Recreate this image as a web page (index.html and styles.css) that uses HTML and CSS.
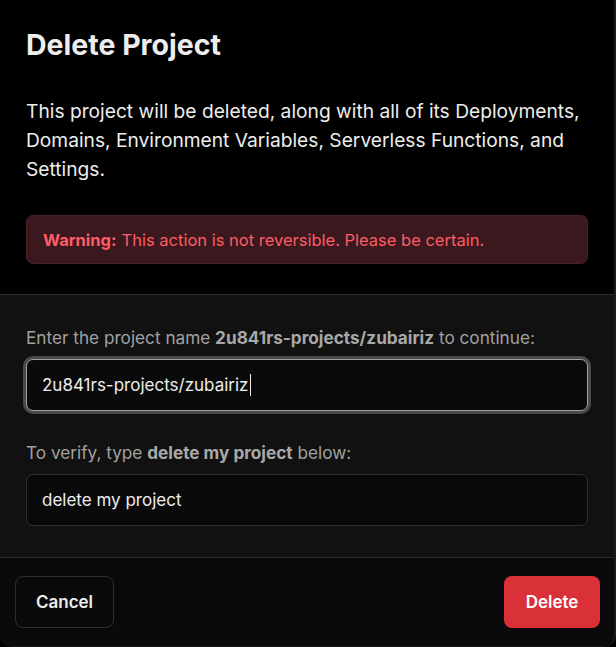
FILE: index.html
```html
<!DOCTYPE html>
<html>
<head>
<meta charset="utf-8">
<link rel="stylesheet" href="styles.css">
</head>
<body>
<div class="modal">
  <div class="head">
    <h1 class="title">Delete Project</h1>
    <p class="desc">This project will be deleted, along with all of its Deployments, Domains, Environment Variables, Serverless Functions, and Settings.</p>
    <div class="warning"><strong>Warning:</strong> This action is not reversible. Please be certain.</div>
  </div>
  <div class="body">
    <label class="label">Enter the project name <b>2u841rs-projects/zubairiz</b> to continue:</label>
    <div class="input focused">2u841rs-projects/zubairiz<span class="caret"></span></div>
    <label class="label second">To verify, type <b>delete my project</b> below:</label>
    <div class="input">delete my project</div>
  </div>
  <div class="foot">
    <button class="btn cancel">Cancel</button>
    <button class="btn delete">Delete</button>
  </div>
</div>
</body>
</html>
```
FILE: styles.css
```css
* { box-sizing: border-box; }
html, body { margin: 0; padding: 0; background: #000; }
body { font-family: Inter, "Noto Sans", sans-serif; color: #ededed; }
.modal {
  width: 616px;
  height: 647px;
  display: flex;
  flex-direction: column;
  border-radius: 0 0 12px 12px;
  overflow: hidden;
  border-right: 2px solid #1a1a1a;
  border-bottom: 1px solid #1a1a1a;
}
.head {
  background: #000;
  padding: 29px 26px 30px;
  border-bottom: 1px solid #2e2e2e;
}
.title {
  margin: 0;
  font-size: 28.5px;
  line-height: 32px;
  font-weight: 700;
  color: #ededed;
}
.desc {
  margin: 36px -12px 0 0;
  font-size: 19.2px;
  line-height: 29px;
  color: #ededed;
}
.warning {
  margin-top: 31px;
  height: 49px;
  display: flex;
  align-items: center;
  padding: 0 16px;
  background: #3a181d;
  border: 1px solid #4a2026;
  border-radius: 7px;
  color: #ff5c66;
  font-size: 16.5px;
}
.warning strong { font-weight: 700; margin-right: 5px; }
.body {
  background: #111;
  padding: 33px 26px 31px;
  border-bottom: 1px solid #2e2e2e;
  display: flex;
  flex-direction: column;
}
.label {
  font-size: 17.2px;
  line-height: 20px;
  color: #a1a1a1;
  margin-bottom: 11px;
}
.label b { font-weight: 700; color: #a8a8a8; }
.label.second { margin-top: 32px; }
.input {
  height: 52px;
  background: #0a0a0a;
  border: 1px solid #2e2e2e;
  border-radius: 7px;
  padding: 0 15px;
  display: flex;
  align-items: center;
  font-size: 17px;
  color: #ededed;
}
.input.focused {
  border-color: #a0a0a0;
  box-shadow: 0 0 0 3px #4a4a4a;
}
.caret {
  display: inline-block;
  width: 1px;
  height: 22px;
  background: #ededed;
  margin-left: 1px;
}
.foot {
  flex: 1;
  background: #0a0a0a;
  padding: 18px 14px 0 15px;
  display: flex;
  justify-content: space-between;
  align-items: flex-start;
}
.btn {
  height: 52px;
  border-radius: 8px;
  font-family: Inter, "Noto Sans", sans-serif;
  font-size: 17px;
  font-weight: 600;
  padding: 0;
  cursor: pointer;
}
.cancel {
  width: 99px;
  background: #0a0a0a;
  border: 1px solid #2e2e2e;
  color: #ededed;
}
.delete {
  width: 96px;
  background: #da3038;
  border: none;
  color: #fff;
}
```
